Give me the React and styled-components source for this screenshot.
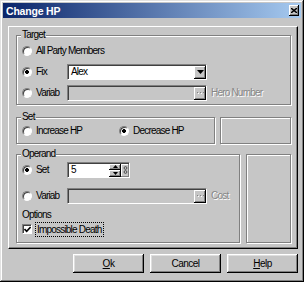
import React from "react";
import styled, { createGlobalStyle } from "styled-components";

const face = "#c6c6c6";

const GlobalStyle = createGlobalStyle`
  body {
    margin: 0;
    background: ${face};
  }
`;

const Window = styled.div`
  width: 304px;
  height: 282px;
  box-sizing: border-box;
  padding: 3px;
  background: ${face};
  box-shadow: inset -1px -1px 0 #000, inset 1px 1px 0 #e2e2e2,
    inset -2px -2px 0 #808080, inset 2px 2px 0 #fff;
  font-family: "Liberation Sans", Arial, sans-serif;
  font-size: 10px;
  letter-spacing: -0.8px;
  color: #000;
  user-select: none;
`;

const TitleBar = styled.div`
  height: 15px;
  display: flex;
  align-items: center;
  justify-content: space-between;
  padding: 0 2px;
  background: linear-gradient(to right, #0a246a, #a6caf0);
`;

const Title = styled.span`
  color: #fff;
  font-weight: bold;
  font-size: 10.5px;
  letter-spacing: -0.2px;
  padding-left: 1px;
`;

const CloseButton = styled.div`
  width: 10px;
  height: 11px;
  box-sizing: border-box;
  background: ${face};
  box-shadow: inset -1px -1px 0 #000, inset 1px 1px 0 #fff,
    inset -2px -2px 0 #808080;
  display: flex;
  align-items: center;
  justify-content: center;
`;

const Panel = styled.div`
  margin: 8px 3px 0 5px;
  height: 223px;
  box-sizing: border-box;
  border: 1px solid;
  border-color: #fff #000 #000 #fff;
  box-shadow: inset -1px -1px 0 #808080;
  padding: 8px 6px 0 7px;
  display: flex;
  flex-direction: column;
`;

const GroupRow = styled.div`
  display: flex;
  gap: ${(p) => p.$gap}px;
  margin-top: ${(p) => p.$mt}px;
`;

const Group = styled.div`
  position: relative;
  box-sizing: border-box;
  width: ${(p) => p.$w}px;
  height: ${(p) => p.$h}px;
  border: 1px solid #808080;
  box-shadow: inset 1px 1px 0 #fff, 1px 1px 0 #fff;
  padding-top: ${(p) => p.$pt || 0}px;
`;

const Legend = styled.span`
  position: absolute;
  top: -7px;
  left: 4px;
  padding: 0 1px;
  line-height: 12px;
  background: ${face};
`;

const Row = styled.div`
  display: flex;
  align-items: center;
  height: ${(p) => p.$h || 21}px;
  padding-left: 5px;
  margin-top: ${(p) => p.$mt || 0}px;
`;

const Option = styled.label`
  display: flex;
  align-items: center;
  flex: none;
  width: ${(p) => (p.$w ? `${p.$w}px` : "auto")};
`;

const Radio = styled.span`
  width: 10px;
  height: 10px;
  box-sizing: border-box;
  border-radius: 50%;
  border: 1px solid;
  border-color: #808080 #fff #fff #808080;
  box-shadow: inset 1px 1px 0 #404040;
  background: ${(p) =>
    p.$on ? "radial-gradient(circle, #000 0 1.6px, #fff 2.2px)" : "#fff"};
  margin-right: 4px;
  flex: none;
`;

const Field = styled.div`
  display: flex;
  flex: none;
  box-sizing: border-box;
  width: ${(p) => p.$w}px;
  height: 16px;
  border: 1px solid;
  border-color: #808080 #fff #fff #808080;
  box-shadow: inset 1px 1px 0 #404040;
  padding: 1px 0 0 1px;
  background: ${(p) => (p.$disabled ? face : "#fff")};
`;

const Value = styled.span`
  flex: 1;
  padding-left: 2px;
  line-height: 12px;
`;

const FieldButton = styled.div`
  width: 12px;
  flex: none;
  box-sizing: border-box;
  background: ${face};
  box-shadow: inset -1px -1px 0 #000, inset 1px 1px 0 #fff,
    inset -2px -2px 0 #808080;
  display: flex;
  align-items: center;
  justify-content: center;
`;

const SpinColumn = styled.div`
  width: 12px;
  flex: none;
  display: flex;
  flex-direction: column;
`;

const SpinHalf = styled(FieldButton)`
  width: 12px;
  flex: 1;
`;

const Knob = styled.div`
  width: 8px;
  flex: none;
  background: ${face};
  box-shadow: inset -1px -1px 0 #808080, inset 1px 1px 0 #fff;
  display: flex;
  align-items: center;
  justify-content: center;
`;

const Hint = styled.span`
  margin-left: 4px;
  color: #868686;
  text-shadow: 1px 1px 0 #fff;
`;

const SubLabel = styled.div`
  padding-left: 5px;
  margin-top: 3px;
  line-height: 12px;
`;

const CheckBox = styled.span`
  width: 10px;
  height: 10px;
  box-sizing: border-box;
  border: 1px solid;
  border-color: #808080 #fff #fff #808080;
  box-shadow: inset 1px 1px 0 #404040;
  background: #fff;
  display: flex;
  align-items: center;
  justify-content: center;
  flex: none;
`;

const FocusText = styled.span`
  margin-left: 3px;
  padding: 0 2px 0 1px;
  line-height: 13px;
  border: 1px dotted #000;
`;

const ButtonRow = styled.div`
  display: flex;
  justify-content: flex-end;
  gap: 6px;
  margin: 5px 3px 0 0;
`;

const Button = styled.div`
  width: 71px;
  height: 19px;
  box-sizing: border-box;
  background: ${face};
  box-shadow: inset -1px -1px 0 #000, inset 1px 1px 0 #fff,
    inset -2px -2px 0 #808080, inset 2px 2px 0 #dedede;
  display: flex;
  align-items: center;
  justify-content: center;
  letter-spacing: -0.5px;
`;

const Arrow = ({ up }) => (
  <svg width="7" height="4" viewBox="0 0 7 4">
    <polygon points={up ? "0,4 7,4 3.5,0" : "0,0 7,0 3.5,4"} fill="#000" />
  </svg>
);

const SmallArrow = ({ up }) => (
  <svg width="5" height="3" viewBox="0 0 5 3">
    <polygon points={up ? "0,3 5,3 2.5,0" : "0,0 5,0 2.5,3"} fill="#000" />
  </svg>
);

const Dots = () => (
  <svg width="7" height="2" viewBox="0 0 7 2">
    <rect x="0" y="0" width="1" height="1" fill="#808080" />
    <rect x="3" y="0" width="1" height="1" fill="#808080" />
    <rect x="6" y="0" width="1" height="1" fill="#808080" />
    <rect x="1" y="1" width="1" height="1" fill="#fff" />
    <rect x="4" y="1" width="1" height="1" fill="#fff" />
  </svg>
);

const Grip = () => (
  <svg width="5" height="8" viewBox="0 0 5 8">
    <circle cx="2.5" cy="2" r="1.4" fill="none" stroke="#333" strokeWidth="0.8" />
    <circle cx="2.5" cy="6" r="1.4" fill="none" stroke="#333" strokeWidth="0.8" />
  </svg>
);

const CloseGlyph = () => (
  <svg width="6" height="5" viewBox="0 0 6 5">
    <path d="M0 0 L6 5 M6 0 L0 5" stroke="#000" strokeWidth="1.4" />
  </svg>
);

const Check = () => (
  <svg width="7" height="7" viewBox="0 0 7 7">
    <path d="M0.5 3 L2.7 5.3 L6.6 1" fill="none" stroke="#000" strokeWidth="1.6" />
  </svg>
);

const RadioOption = ({ on, width, children }) => (
  <Option $w={width}>
    <Radio $on={on} />
    {children}
  </Option>
);

const ValueField = ({ width, value, disabled, hint }) => (
  <>
    <Field $w={width} $disabled={disabled}>
      <Value>{value}</Value>
      <FieldButton>{disabled ? <Dots /> : <Arrow />}</FieldButton>
    </Field>
    {hint && <Hint>{hint}</Hint>}
  </>
);

export default function App() {
  return (
    <>
      <GlobalStyle />
      <Window>
        <TitleBar>
          <Title>Change HP</Title>
          <CloseButton>
            <CloseGlyph />
          </CloseButton>
        </TitleBar>

        <Panel>
          <Group $w={275} $h={70} $pt={4}>
            <Legend>Target</Legend>
            <Row>
              <RadioOption>All Party Members</RadioOption>
            </Row>
            <Row>
              <RadioOption on width={45}>Fix</RadioOption>
              <ValueField width={140} value="Alex" />
            </Row>
            <Row>
              <RadioOption width={45}>Variab</RadioOption>
              <ValueField width={140} disabled hint="Hero Number" />
            </Row>
          </Group>

          <GroupRow $gap={5} $mt={12}>
            <Group $w={199} $h={27} $pt={2}>
              <Legend>Set</Legend>
              <Row>
                <RadioOption width={97}>Increase HP</RadioOption>
                <RadioOption on>Decrease HP</RadioOption>
              </Row>
            </Group>
            <Group $w={71} $h={27} />
          </GroupRow>

          <GroupRow $gap={6} $mt={10}>
            <Group $w={224} $h={89} $pt={4}>
              <Legend>Operand</Legend>
              <Row>
                <RadioOption on width={45}>Set</RadioOption>
                <Field $w={63}>
                  <Value>5</Value>
                  <SpinColumn>
                    <SpinHalf>
                      <SmallArrow up />
                    </SpinHalf>
                    <SpinHalf>
                      <SmallArrow />
                    </SpinHalf>
                  </SpinColumn>
                  <Knob>
                    <Grip />
                  </Knob>
                </Field>
              </Row>
              <Row $mt={5}>
                <RadioOption width={45}>Variab</RadioOption>
                <ValueField width={140} disabled hint="Cost" />
              </Row>
              <SubLabel>Options</SubLabel>
              <Row $h={16}>
                <CheckBox>
                  <Check />
                </CheckBox>
                <FocusText>Impossible Death</FocusText>
              </Row>
            </Group>
            <Group $w={45} $h={89} />
          </GroupRow>
        </Panel>

        <ButtonRow>
          <Button>
            <u>O</u>k
          </Button>
          <Button>Cancel</Button>
          <Button>
            <u>H</u>elp
          </Button>
        </ButtonRow>
      </Window>
    </>
  );
}
